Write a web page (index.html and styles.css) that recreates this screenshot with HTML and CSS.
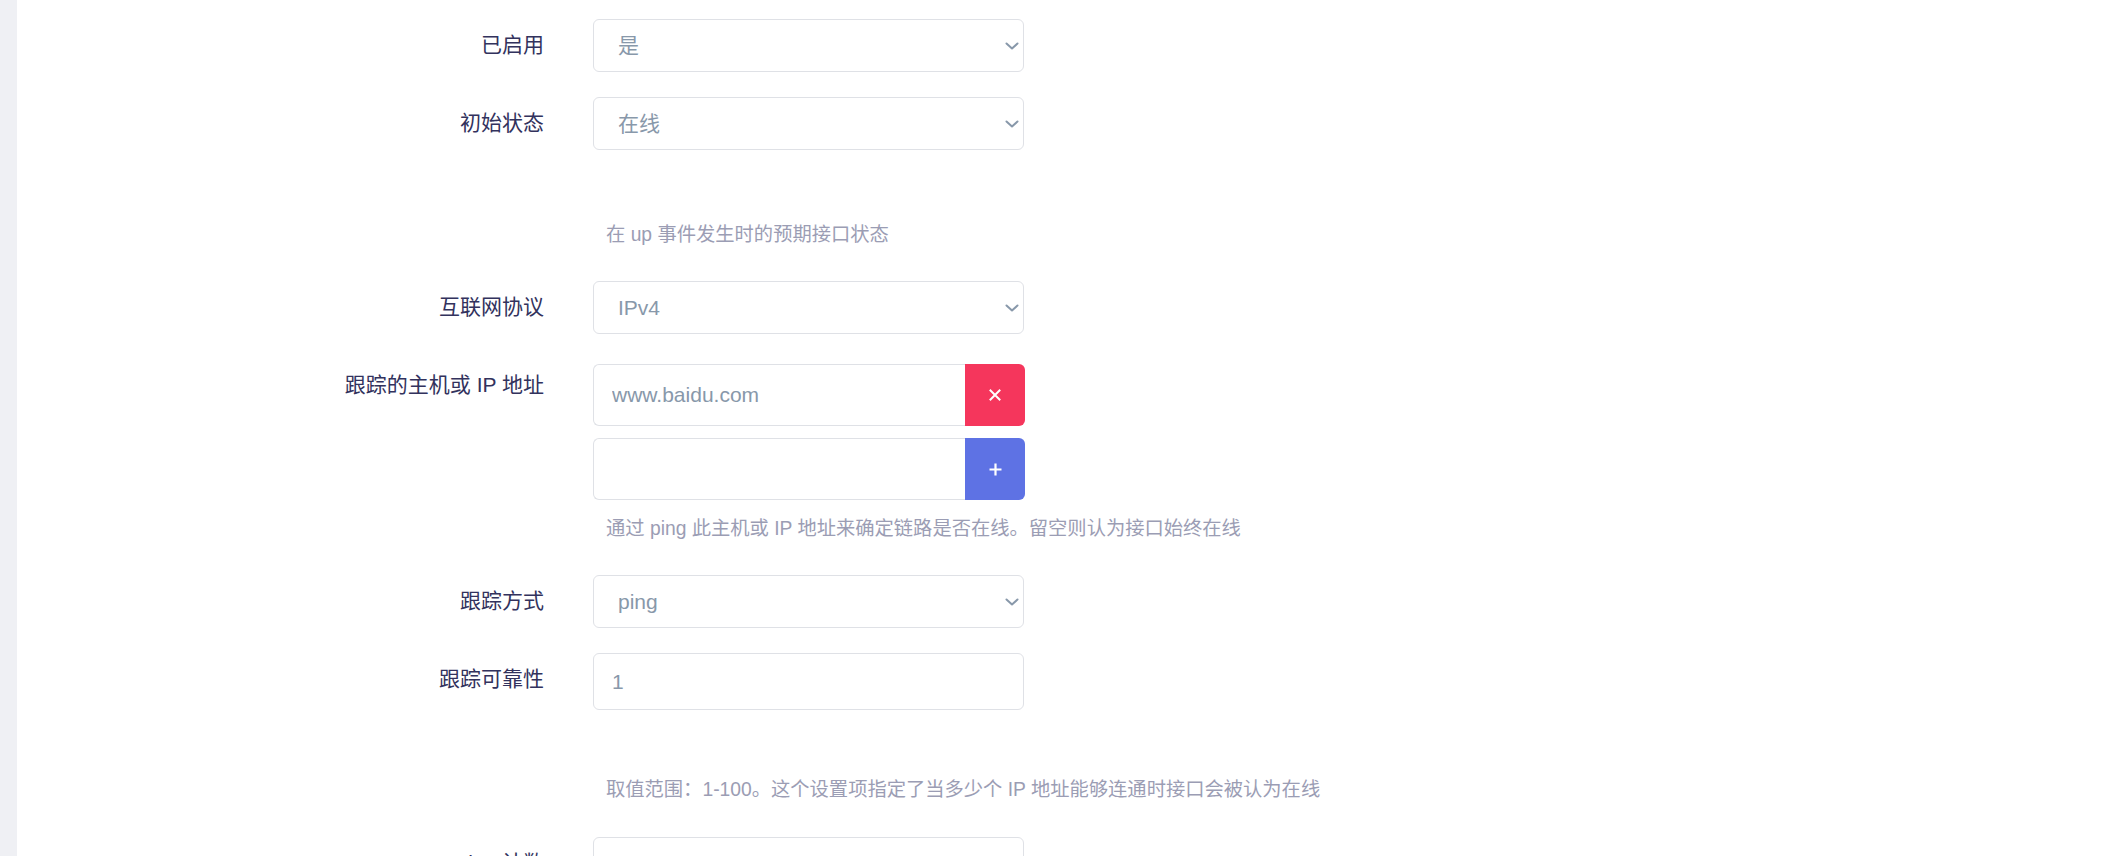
FILE: index.html
```html
<!DOCTYPE html>
<html lang="zh-CN">
<head>
<meta charset="utf-8">
<title>接口设置</title>
<link rel="stylesheet" href="styles.css">
</head>
<body>
<div class="page">
  <aside class="sidebar"></aside>
  <main class="main">
    <form class="form">
      <div class="row">
        <label class="label">已启用</label>
        <div class="field">
          <div class="select-wrap">
            <select class="select"><option>是</option><option>否</option></select>
            <svg class="chev" width="14" height="8" viewBox="0 0 14 8"><polyline points="1.5,1.5 7,6.5 12.5,1.5" fill="none" stroke="#8898aa" stroke-width="2" stroke-linecap="round" stroke-linejoin="round"/></svg>
          </div>
        </div>
      </div>

      <div class="row">
        <label class="label">初始状态</label>
        <div class="field">
          <div class="select-wrap">
            <select class="select"><option>在线</option><option>离线</option></select>
            <svg class="chev" width="14" height="8" viewBox="0 0 14 8"><polyline points="1.5,1.5 7,6.5 12.5,1.5" fill="none" stroke="#8898aa" stroke-width="2" stroke-linecap="round" stroke-linejoin="round"/></svg>
          </div>
          <div class="desc desc-far">在 up 事件发生时的预期接口状态</div>
        </div>
      </div>

      <div class="row">
        <label class="label">互联网协议</label>
        <div class="field">
          <div class="select-wrap">
            <select class="select"><option>IPv4</option><option>IPv6</option></select>
            <svg class="chev" width="14" height="8" viewBox="0 0 14 8"><polyline points="1.5,1.5 7,6.5 12.5,1.5" fill="none" stroke="#8898aa" stroke-width="2" stroke-linecap="round" stroke-linejoin="round"/></svg>
          </div>
        </div>
      </div>

      <div class="row row-dyn">
        <label class="label label-top">跟踪的主机或 IP 地址</label>
        <div class="field">
          <div class="dynlist">
            <div class="dyn-item">
              <input class="dyn-input" type="text" placeholder="www.baidu.com">
              <button class="dyn-btn btn-remove" type="button" aria-label="删除">
                <svg width="12" height="12" viewBox="0 0 12 12"><path d="M1.5 1.5 L10.5 10.5 M10.5 1.5 L1.5 10.5" stroke="#fff" stroke-width="2" stroke-linecap="square"/></svg>
              </button>
            </div>
            <div class="dyn-item">
              <input class="dyn-input" type="text">
              <button class="dyn-btn btn-add" type="button" aria-label="添加">
                <svg width="13" height="13" viewBox="0 0 13 13"><path d="M6.5 0.5 V12.5 M0.5 6.5 H12.5" stroke="#fff" stroke-width="2.2"/></svg>
              </button>
            </div>
          </div>
          <div class="desc">通过 ping 此主机或 IP 地址来确定链路是否在线。留空则认为接口始终在线</div>
        </div>
      </div>

      <div class="row">
        <label class="label">跟踪方式</label>
        <div class="field">
          <div class="select-wrap">
            <select class="select"><option>ping</option><option>arping</option><option>httping</option></select>
            <svg class="chev" width="14" height="8" viewBox="0 0 14 8"><polyline points="1.5,1.5 7,6.5 12.5,1.5" fill="none" stroke="#8898aa" stroke-width="2" stroke-linecap="round" stroke-linejoin="round"/></svg>
          </div>
        </div>
      </div>

      <div class="row">
        <label class="label">跟踪可靠性</label>
        <div class="field">
          <input class="text-input" type="text" value="1">
          <div class="desc desc-mid">取值范围：1-100。这个设置项指定了当多少个 IP 地址能够连通时接口会被认为在线</div>
        </div>
      </div>

      <div class="row">
        <label class="label">Ping 计数</label>
        <div class="field">
          <input class="text-input" type="text" value="1">
        </div>
      </div>
    </form>
  </main>
</div>
</body>
</html>
```

FILE: styles.css
```css
html, body {
  margin: 0;
  padding: 0;
  height: 100%;
  overflow: hidden;
  background: #ffffff;
}

body {
  font-family: "Liberation Sans", "Noto Sans CJK SC", sans-serif;
  color: #32325d;
}

.page {
  display: flex;
  min-height: 100vh;
}

.sidebar {
  flex: 0 0 17px;
  background: #eff0f4;
}

.main {
  flex: 1;
  background: #ffffff;
}

.form {
  display: flex;
  flex-direction: column;
  row-gap: 25px;
  padding-top: 19px;
}

.row {
  display: flex;
  column-gap: 49px;
  align-items: flex-start;
}

.row-dyn {
  margin-top: 5px;
}

.label {
  flex: 0 0 527px;
  text-align: right;
  font-size: 21px;
  line-height: 30px;
  padding-top: 11px;
  color: #32325d;
  font-weight: 400;
}

.label-top {
  padding-top: 6px;
}

.field {
  display: flex;
  flex-direction: column;
  width: 431px;
}

.select-wrap {
  position: relative;
  width: 431px;
  height: 53px;
}

.select {
  appearance: none;
  -webkit-appearance: none;
  box-sizing: border-box;
  width: 100%;
  height: 53px;
  margin: 0;
  padding: 0 30px 0 24px;
  border: 1px solid #dfe1e6;
  border-radius: 6px;
  background: #ffffff;
  font-family: "Liberation Sans", "Noto Sans CJK SC", sans-serif;
  font-size: 21px;
  color: #8898aa;
  outline: none;
}

.chev {
  position: absolute;
  right: 5px;
  top: 23px;
  pointer-events: none;
}

.text-input {
  box-sizing: border-box;
  width: 431px;
  height: 57px;
  margin: 0;
  padding: 0 18px;
  border: 1px solid #dfe1e6;
  border-radius: 6px;
  background: #ffffff;
  font-family: "Liberation Sans", "Noto Sans CJK SC", sans-serif;
  font-size: 21px;
  color: #8898aa;
  outline: none;
}

.dynlist {
  display: flex;
  flex-direction: column;
  row-gap: 12px;
}

.dyn-item {
  display: flex;
  width: 432px;
  height: 62px;
}

.dyn-input {
  box-sizing: border-box;
  flex: 0 0 372px;
  height: 62px;
  margin: 0;
  padding: 0 18px;
  border: 1px solid #dfe1e6;
  border-right: none;
  border-radius: 6px 0 0 6px;
  background: #ffffff;
  font-family: "Liberation Sans", "Noto Sans CJK SC", sans-serif;
  font-size: 21px;
  color: #8898aa;
  outline: none;
}

.dyn-input::placeholder {
  color: #8898aa;
}

.dyn-btn {
  flex: 0 0 60px;
  height: 62px;
  margin: 0;
  padding: 0;
  border: none;
  border-radius: 0 6px 6px 0;
  display: flex;
  align-items: center;
  justify-content: center;
  cursor: pointer;
}

.btn-remove {
  background: #f5365c;
}

.btn-add {
  background: #5e72e4;
}

.desc {
  font-size: 19.3px;
  line-height: 28px;
  padding-left: 13px;
  margin: 15px 0 7px;
  color: #9b9db4;
  white-space: nowrap;
}

.desc-far {
  margin-top: 71px;
}

.desc-mid {
  margin-top: 66px;
  margin-bottom: 8px;
}
```
